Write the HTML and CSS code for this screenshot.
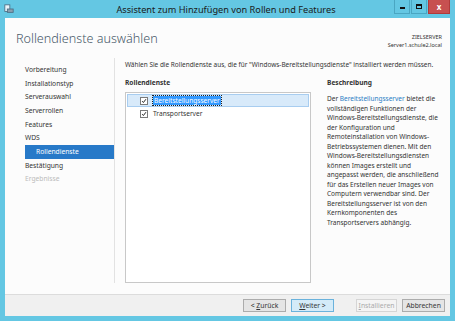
FILE: index.html
```html
<!DOCTYPE html>
<html lang="de">
<head>
<meta charset="UTF-8" />
<title>Assistent zum Hinzufügen von Rollen und Features</title>
<link rel="stylesheet" href="styles.css">
</head>
<body>
<div class="window">
  <!-- Titelleiste -->
  <div class="titlebar">
    <svg class="app-icon" viewBox="0 0 12 12">
      <rect x="1" y="1" width="6" height="8" fill="#e8f4fa" stroke="#4a6a80" stroke-width="1"/>
      <rect x="4" y="6" width="7" height="4" fill="#8aa0b0" stroke="#4a6a80" stroke-width="1"/>
    </svg>
    <div class="title">Assistent zum Hinzufügen von Rollen und Features</div>
    <div class="win-buttons">
      <div class="wbtn min"><span></span></div>
      <div class="wbtn max"><span></span></div>
      <div class="wbtn close">x</div>
    </div>
  </div>

  <div class="client">
    <div class="header">
      <h1>Rollendienste auswählen</h1>
      <div class="target">
        <div>ZIELSERVER</div>
        <div>Server1.schule2.local</div>
      </div>
    </div>

    <div class="main">
      <ul class="nav">
        <li>Vorbereitung</li>
        <li>Installationstyp</li>
        <li>Serverauswahl</li>
        <li>Serverrollen</li>
        <li>Features</li>
        <li>WDS</li>
        <li class="active">Rollendienste</li>
        <li>Bestätigung</li>
        <li class="disabled">Ergebnisse</li>
      </ul>

      <div class="content">
        <p class="intro">Wählen Sie die Rollendienste aus, die für "Windows-Bereitstellungsdienste" installiert werden müssen.</p>
        <div class="columns">
          <div class="services">
            <h2>Rollendienste</h2>
            <div class="listbox">
              <div class="item selected">
                <span class="check">
                  <svg viewBox="0 0 8 8"><path d="M1.5 4.2 L3.2 6 L6.6 1.6" fill="none" stroke="#222" stroke-width="1.3"/></svg>
                </span>
                <span class="label">Bereitstellungsserver</span>
              </div>
              <div class="item">
                <span class="check">
                  <svg viewBox="0 0 8 8"><path d="M1.5 4.2 L3.2 6 L6.6 1.6" fill="none" stroke="#222" stroke-width="1.3"/></svg>
                </span>
                <span class="label">Transportserver</span>
              </div>
            </div>
          </div>
          <div class="description">
            <h2>Beschreibung</h2>
            <p>Der <a>Bereitstellungsserver</a> bietet die vollständigen Funktionen der Windows-Bereitstellungsdienste, die der Konfiguration und Remoteinstallation von Windows-Betriebssystemen dienen. Mit den Windows-Bereitstellungsdiensten können Images erstellt und angepasst werden, die anschließend für das Erstellen neuer Images von Computern verwendbar sind. Der Bereitstellungsserver ist von den Kernkomponenten des Transportservers abhängig.</p>
          </div>
        </div>
      </div>
    </div>

    <div class="footer">
      <button class="btn">&lt; <u>Z</u>urück</button>
      <button class="btn primary"><u>W</u>eiter &gt;</button>
      <button class="btn disabled gap"><u>I</u>nstallieren</button>
      <button class="btn">Abbrechen</button>
    </div>
  </div>
</div>
</body>
</html>
```

FILE: styles.css
```css
* {
  margin: 0;
  padding: 0;
  box-sizing: border-box;
}
body {
  font-family: "Noto Sans", "Open Sans", sans-serif;
  background: #62c6e2;
  color: #1e1e1e;
}

.window {
  width: 455px;
  height: 321px;
  display: flex;
  flex-direction: column;
  background: #64c7e3;
}

/* Titelleiste */
.titlebar {
  height: 18px;
  display: flex;
  align-items: center;
}
.app-icon {
  width: 10px;
  height: 10px;
  margin-left: 4px;
}
.title {
  flex: 1;
  text-align: center;
  font-size: 9.2px;
  color: #1a1a1a;
  margin-left: 44px;
}
.win-buttons {
  display: flex;
  align-self: flex-start;
  margin-right: 5px;
}
.wbtn {
  width: 16px;
  height: 14px;
  display: flex;
  align-items: center;
  justify-content: center;
  border: 1px solid #4aa6c2;
  border-top: none;
  margin-right: 1px;
}
.wbtn.min span {
  width: 5px;
  height: 2px;
  background: #111;
  margin-top: 3px;
}
.wbtn.max span {
  width: 6px;
  height: 5px;
  border: 1px solid #111;
  border-top-width: 2px;
}
.wbtn.close {
  width: 22px;
  background: #c75050;
  border-color: #b03a3a;
  color: #fff;
  font-size: 8px;
  font-weight: 700;
  margin-right: 0;
}

/* Client */
.client {
  flex: 1;
  margin: 0 5px 5px 5px;
  background: #fcfcfc;
  display: flex;
  flex-direction: column;
}

.header {
  height: 40px;
  display: flex;
  justify-content: space-between;
  padding: 12px 0 0 11px;
}
h1 {
  font-weight: 300;
  font-size: 12.6px;
  color: #475868;
}
.target {
  text-align: right;
  font-size: 5.5px;
  line-height: 8px;
  color: #333;
  padding: 3px 8px 0 0;
}

.main {
  flex: 1;
  display: flex;
  padding-bottom: 11px;
}

/* Navigation */
.nav {
  list-style: none;
  width: 110px;
  padding: 5px 0 0 20px;
  border-right: 1px solid #e2e2e2;
  font-size: 6.7px;
  color: #333;
}
.nav li {
  height: 13.67px;
  line-height: 13.67px;
}
.nav li.active {
  background: #2779c8;
  color: #fff;
  padding-left: 11px;
}
.nav li.disabled {
  color: #bbb;
}

/* Inhalt */
.content {
  flex: 1;
  padding: 2px 5px 0 10px;
  display: flex;
  flex-direction: column;
}
.intro {
  font-size: 6.45px;
  color: #333;
  white-space: nowrap;
}
.columns {
  flex: 1;
  display: flex;
  margin-top: 9px;
}
h2 {
  font-size: 6.6px;
  font-weight: 700;
  color: #333;
  margin-bottom: 5px;
}
.services {
  width: 186px;
  display: flex;
  flex-direction: column;
}
.listbox {
  flex: 1;
  background: #fff;
  border: 1px solid #c8c8c8;
  padding: 1px 1px;
}
.item {
  height: 13px;
  display: flex;
  align-items: center;
  padding-left: 12px;
  font-size: 6.6px;
  color: #333;
  border: 1px solid transparent;
}
.item.selected {
  background: #d8eafa;
  border-color: #a8cdf0;
}
.check {
  width: 8px;
  height: 8px;
  border: 1px solid #7a7a7a;
  background: #fff;
  display: flex;
  margin-right: 5px;
}
.check svg {
  width: 6px;
  height: 6px;
}
.item.selected .label {
  background: #3399ff;
  color: #fff;
  outline: 1px dotted #222;
  padding: 0 1px;
}

.description {
  flex: 1;
  padding-left: 16px;
}
.description p {
  font-size: 6.5px;
  line-height: 9.5px;
  color: #333;
  width: 116px;
  margin-top: 7px;
}
.description a {
  color: #2b7cc4;
}

/* Schaltflächen */
.footer {
  height: 22px;
  background: #f0f0f0;
  border-top: 1px solid #dcdcdc;
  display: flex;
  justify-content: flex-end;
  align-items: center;
  padding-right: 5px;
  gap: 5px;
}
.btn {
  font-family: inherit;
  font-size: 6.8px;
  color: #333;
  width: 43px;
  height: 13px;
  background: #e5e5e5;
  border: 1px solid #acacac;
}
.btn.primary {
  background: #d4ebf8;
  border-color: #6ab2dc;
}
.btn.disabled {
  background: #f4f4f4;
  border-color: #d5d5d5;
  color: #aaa;
}
.btn.gap {
  margin-left: 17px;
  width: 41px;
}
```
